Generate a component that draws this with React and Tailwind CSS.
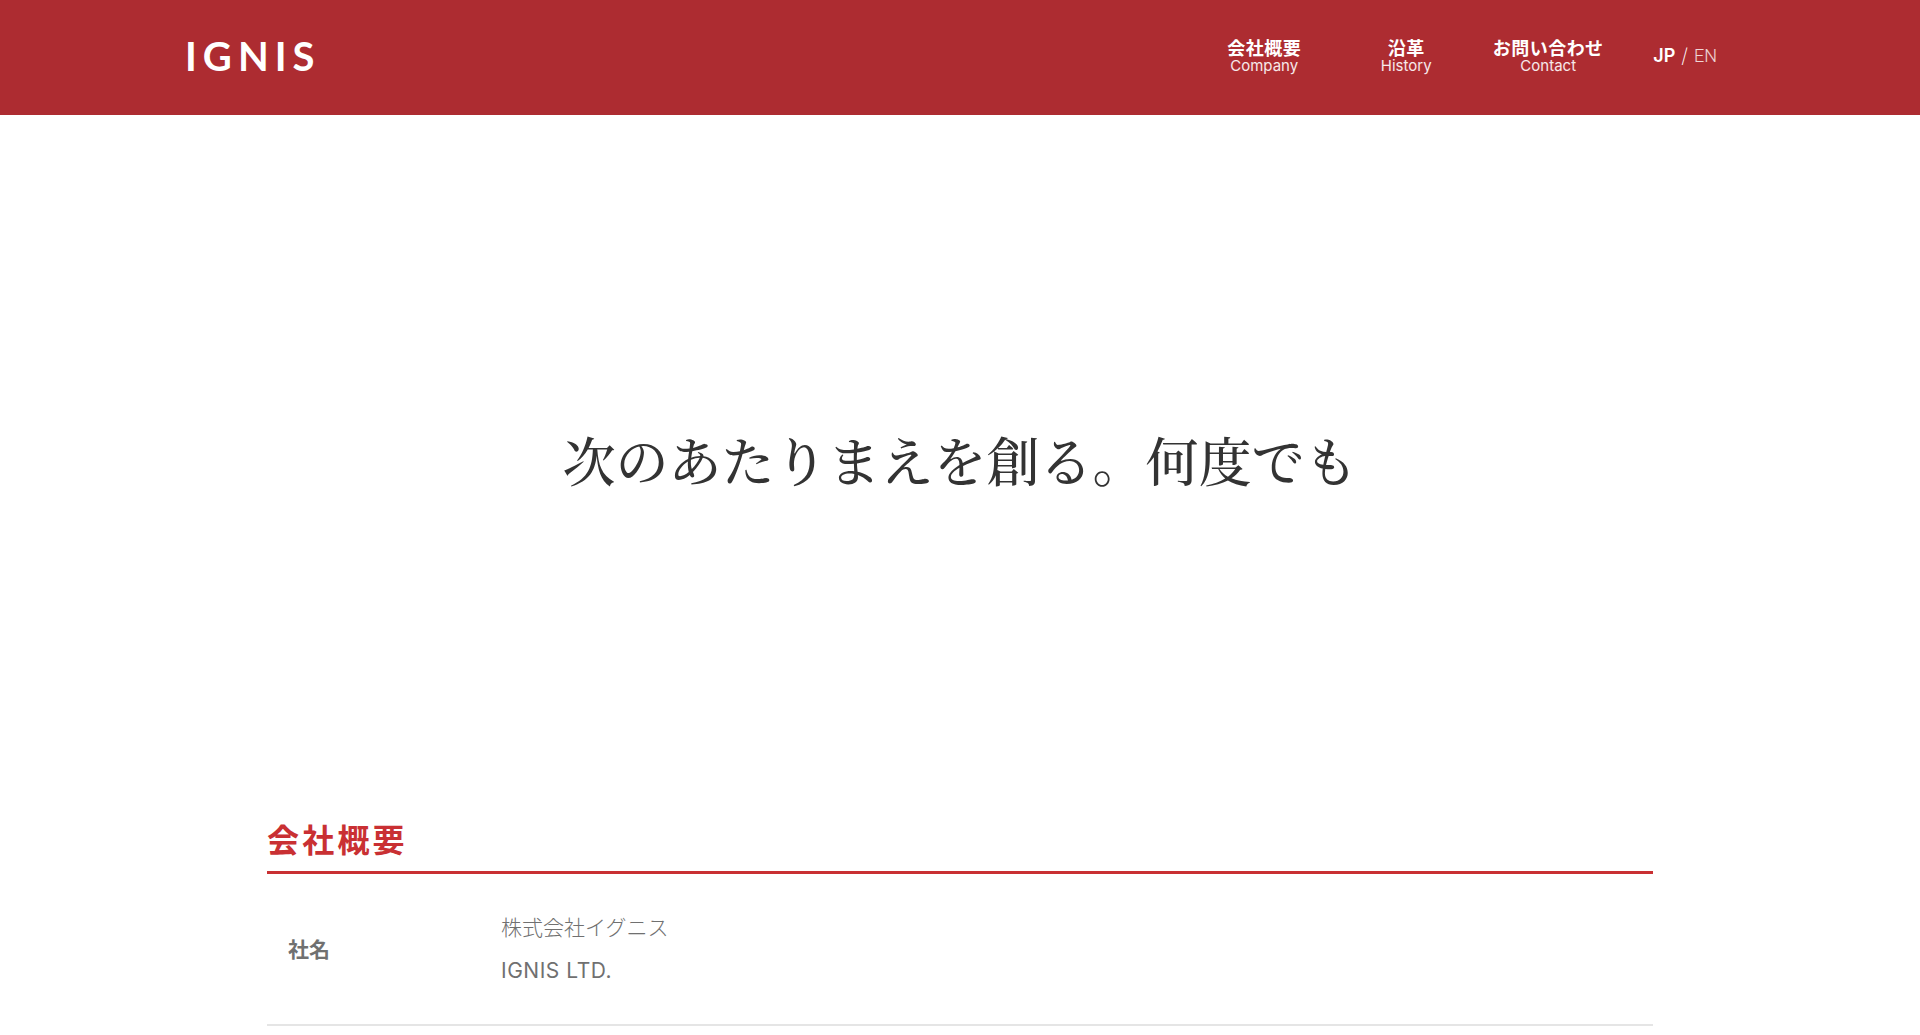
const navItems = [
  { ja: "会社概要", en: "Company", href: "#company" },
  { ja: "沿革", en: "History", href: "#history" },
  { ja: "お問い合わせ", en: "Contact", href: "#contact" },
];

function Header() {
  return (
    <header className="bg-[#ad2c31] text-white">
      <div className="mx-auto flex h-[115px] w-full max-w-[1550px] items-center justify-between">
        <a href="#top" className="pb-1 font-['Lato',sans-serif] text-[40px] leading-none font-bold tracking-[6px]">
          IGNIS
        </a>
        <div className="flex items-center pr-[18px] pb-px">
          <nav className="grid grid-cols-3">
            {navItems.map((item) => (
              <a key={item.en} href={item.href} className="flex w-[142px] flex-col items-center">
                <span className="text-[18px] leading-[18px] font-bold tracking-wide">{item.ja}</span>
                <span className="text-[15px] leading-[16px] font-normal text-white/90">{item.en}</span>
              </a>
            ))}
          </nav>
          <div className="ml-[34px] flex gap-[6px] pb-0.5 text-[18px] leading-6">
            <a href="#jp" className="font-semibold">JP</a>
            <span className="text-[20px] font-extralight">/</span>
            <a href="#en" className="font-['Roboto','Inter',sans-serif] font-light text-white/80">EN</a>
          </div>
        </div>
      </div>
    </header>
  );
}

function Hero() {
  return (
    <section className="flex h-[688px] items-center justify-center">
      <h1 className="font-['Noto_Serif_CJK_JP','Noto_Serif_JP','Liberation_Serif','Noto_Sans_CJK_JP',serif] text-[53px] leading-none font-medium text-[#333]">
        次のあたりまえを創る。何度でも
      </h1>
    </section>
  );
}

function Company() {
  return (
    <section id="company" className="mx-auto w-full max-w-[1386px]">
      <h2 className="border-b-3 border-[#c93033] pt-3.5 pb-1.5 text-[32px] leading-[48px] font-bold tracking-widest text-[#c93033]">
        会社概要
      </h2>
      <table className="w-full text-left text-[21px] leading-[43px] text-[#707070]">
        <tbody>
          <tr className="border-b-2 border-[#e5e5e5]">
            <th scope="row" className="w-[234px] py-8 pl-[21px] font-bold">社名</th>
            <td className="py-8">
              <p className="font-light">株式会社イグニス</p>
              <p className="tracking-wide">IGNIS LTD.</p>
            </td>
          </tr>
        </tbody>
      </table>
    </section>
  );
}

export default function App() {
  return (
    <div id="top" lang="ja" className="bg-white font-['Inter','Noto_Sans_CJK_JP',sans-serif]">
      <Header />
      <main>
        <Hero />
        <Company />
      </main>
    </div>
  );
}
